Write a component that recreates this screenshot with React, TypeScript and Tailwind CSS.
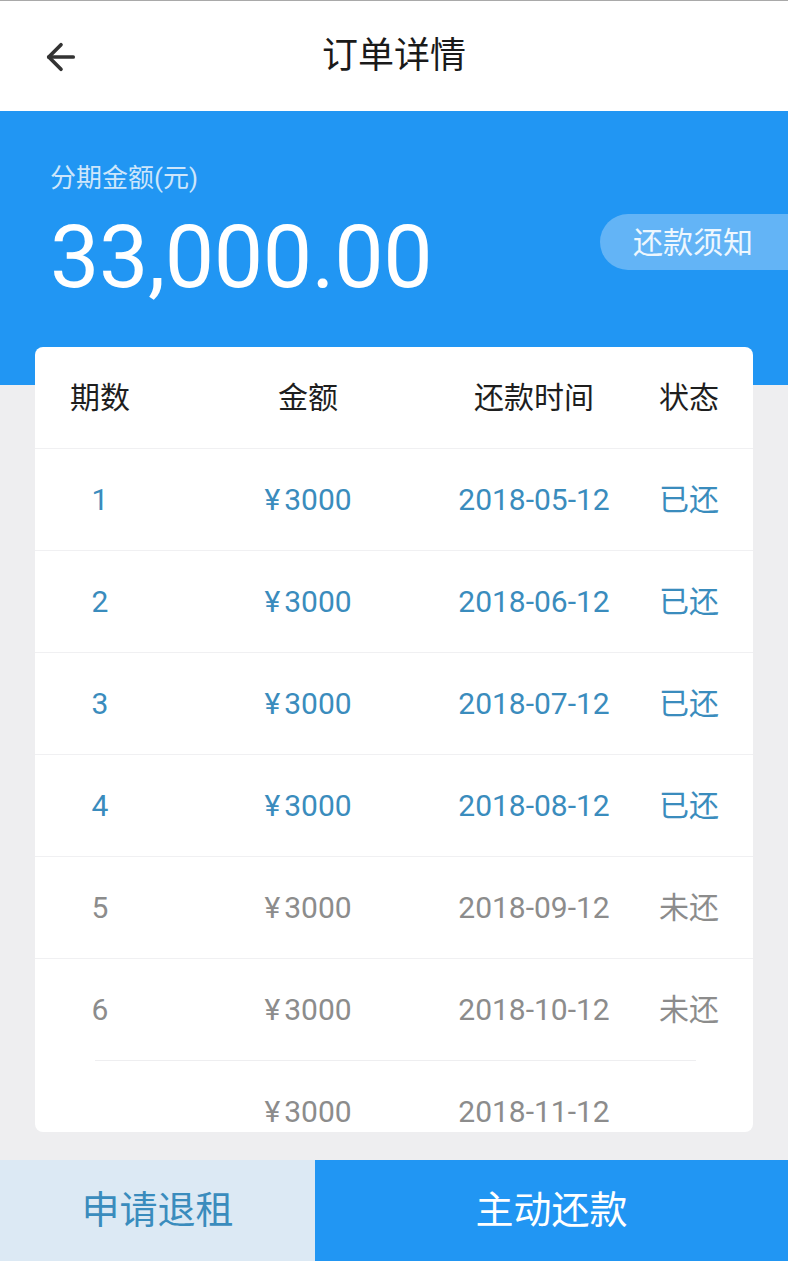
import { ArrowLeft } from "lucide-react";

type Row = {
  no: string;
  amount: string;
  date: string;
  status: string;
  paid: boolean;
};

const rows: Row[] = [
  { no: "1", amount: "3000", date: "2018-05-12", status: "已还", paid: true },
  { no: "2", amount: "3000", date: "2018-06-12", status: "已还", paid: true },
  { no: "3", amount: "3000", date: "2018-07-12", status: "已还", paid: true },
  { no: "4", amount: "3000", date: "2018-08-12", status: "已还", paid: true },
  { no: "5", amount: "3000", date: "2018-09-12", status: "未还", paid: false },
  { no: "6", amount: "3000", date: "2018-10-12", status: "未还", paid: false },
  { no: "", amount: "3000", date: "2018-11-12", status: "", paid: false },
];

const font = "font-['Roboto','Noto_Sans_CJK_SC',sans-serif]";

export default function App() {
  return (
    <div className={`flex h-[1261px] w-[788px] flex-col overflow-hidden bg-[#eeeef0] ${font}`}>
      {/* top bar */}
      <div className="relative flex h-[111px] shrink-0 items-center justify-center border-t border-[#a9a9a9] bg-white">
        <ArrowLeft className="absolute left-[40px] top-[35px] h-[42px] w-[42px] text-[#333]" strokeWidth={2.1} />
        <h1 className="text-[36px] font-normal text-[#1a1a1a]">订单详情</h1>
      </div>

      {/* summary */}
      <div className="relative h-[274px] shrink-0 bg-[#2196f3] px-[50px] pt-[50px]">
        <div className="text-[26px] leading-[34px] text-[#cde6fb]">分期金额(元)</div>
        <div className="mt-[12px] text-[88px] leading-[100px] tracking-[-0.5px] text-white">33,000.00</div>
        <div className="absolute right-0 top-[103px] flex h-[56px] w-[188px] items-center rounded-l-full bg-[#63b4f6] pl-[33px] text-[30px] text-[#eef7fe]">
          还款须知
        </div>
      </div>

      {/* schedule */}
      <div className="relative z-10 mx-[35px] -mt-[38px] h-[785px] shrink-0 overflow-hidden rounded-[8px] bg-white">
        <div className="grid h-[101px] grid-cols-[130px_286px_166px_1fr] items-center text-[30px] text-[#1e1e1e]">
          <div className="text-center">期数</div>
          <div className="text-center">金额</div>
          <div className="text-center">还款时间</div>
          <div className="pl-2 text-center">状态</div>
        </div>
        {rows.map((r, i) => (
          <div key={i}>
            {i === 6 ? (
              <div className="ml-[60px] mr-[57px] border-t border-[#eeeef0]" />
            ) : (
              <div className="border-t border-[#f0f0f2]" />
            )}
            <div
              className={`grid h-[101px] grid-cols-[130px_286px_166px_1fr] items-center text-[30px] ${
                r.paid ? "text-[#3a8cbd]" : "text-[#8c8c8c]"
              }`}
            >
              <div className="text-center">{r.no}</div>
              <div className="text-center">
                <span className="mr-[4px]">¥</span>
                {r.amount}
              </div>
              <div className="text-center">{r.date}</div>
              <div className="pl-2 text-center">{r.status}</div>
            </div>
          </div>
        ))}
      </div>

      {/* actions */}
      <div className="mt-auto flex h-[101px] shrink-0">
        <button className="flex w-[315px] items-center justify-center bg-[#dce9f4] text-[38px] text-[#3a8cbd]">
          申请退租
        </button>
        <button className="flex flex-1 items-center justify-center bg-[#2196f3] text-[38px] text-white">
          主动还款
        </button>
      </div>
    </div>
  );
}
